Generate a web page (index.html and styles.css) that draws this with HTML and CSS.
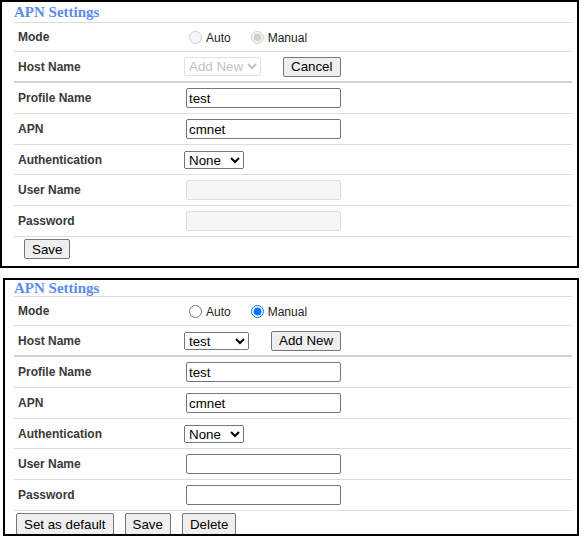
FILE: index.html
```html
<!DOCTYPE html>
<html>
<head>
<meta charset="utf-8">
<link rel="stylesheet" href="styles.css">
</head>
<body>
<div class="panel panel-a">
  <div class="heading">APN Settings</div>
  <div class="row row-mode">
    <div class="label">Mode</div>
    <div class="field">
      <label class="radio"><input type="radio" name="m1" disabled>Auto</label>
      <label class="radio"><input type="radio" name="m1" checked disabled>Manual</label>
    </div>
  </div>
  <div class="row row-host">
    <div class="label">Host Name</div>
    <div class="field">
      <select class="sel sel-addnew" disabled><option>Add New</option></select>
      <button class="btn btn-gap">Cancel</button>
    </div>
  </div>
  <div class="row">
    <div class="label">Profile Name</div>
    <div class="field"><input class="txt" type="text" value="test"></div>
  </div>
  <div class="row">
    <div class="label">APN</div>
    <div class="field"><input class="txt" type="text" value="cmnet"></div>
  </div>
  <div class="row row-auth">
    <div class="label">Authentication</div>
    <div class="field"><select class="sel sel-auth"><option>None</option></select></div>
  </div>
  <div class="row">
    <div class="label">User Name</div>
    <div class="field"><input class="txt" type="text" disabled></div>
  </div>
  <div class="row">
    <div class="label">Password</div>
    <div class="field"><input class="txt" type="password" disabled></div>
  </div>
  <div class="footer footer-a">
    <button class="btn">Save</button>
  </div>
</div>

<div class="panel panel-b">
  <div class="heading">APN Settings</div>
  <div class="row row-mode">
    <div class="label">Mode</div>
    <div class="field">
      <label class="radio"><input type="radio" name="m2">Auto</label>
      <label class="radio"><input type="radio" name="m2" checked>Manual</label>
    </div>
  </div>
  <div class="row row-host">
    <div class="label">Host Name</div>
    <div class="field">
      <select class="sel sel-host"><option>test</option></select>
      <button class="btn btn-gap">Add New</button>
    </div>
  </div>
  <div class="row">
    <div class="label">Profile Name</div>
    <div class="field"><input class="txt" type="text" value="test"></div>
  </div>
  <div class="row">
    <div class="label">APN</div>
    <div class="field"><input class="txt" type="text" value="cmnet"></div>
  </div>
  <div class="row row-auth">
    <div class="label">Authentication</div>
    <div class="field"><select class="sel sel-auth"><option>None</option></select></div>
  </div>
  <div class="row">
    <div class="label">User Name</div>
    <div class="field"><input class="txt" type="text"></div>
  </div>
  <div class="row">
    <div class="label">Password</div>
    <div class="field"><input class="txt" type="password"></div>
  </div>
  <div class="footer footer-b">
    <button class="btn">Set as default</button>
    <button class="btn">Save</button>
    <button class="btn">Delete</button>
  </div>
</div>
</body>
</html>
```

FILE: styles.css
```css
html, body {
  margin: 0;
  padding: 0;
  background: #fff;
}
body {
  font-family: "Liberation Sans", Arial, sans-serif;
  color: #333;
}
.panel {
  box-sizing: border-box;
  border: 2px solid #000;
  padding-right: 5px;
}
.panel-a {
  width: 579px;
  margin-left: 0;
  padding-left: 12px;
}
.panel-b {
  width: 576px;
  margin-left: 3px;
  margin-top: 10px;
  padding-left: 9px;
}
.heading {
  font-family: "Liberation Serif", "Times New Roman", serif;
  font-weight: bold;
  font-size: 15px;
  color: #5b8def;
  height: 20px;
  line-height: 20px;
  border-bottom: 1px solid #dcdcdc;
}
.panel-b .heading {
  height: 16px;
  line-height: 16px;
}
.row {
  display: flex;
  align-items: center;
  height: 30px;
  border-bottom: 1px solid #dcdcdc;
}
.row-mode {
  height: 28px;
}
.row-host {
  height: 29px;
  border-bottom: 2px solid #d2d2d2;
}
.row-auth {
  height: 29px;
}
.label {
  width: 166px;
  padding-left: 4px;
  font-size: 12px;
  font-weight: bold;
  color: #3a3a3a;
}
.field {
  display: flex;
  align-items: center;
}
.radio {
  display: inline-flex;
  align-items: center;
  font-size: 12px;
  color: #222;
  margin-right: 15px;
  padding-top: 2px;
}
.radio input {
  margin: 0 4px 2px 5px;
  width: 13px;
  height: 13px;
}
.txt {
  box-sizing: border-box;
  width: 155px;
  height: 20px;
  margin: 0 0 0 2px;
  padding: 1px 2px;
  font-family: "Liberation Sans", Arial, sans-serif;
  font-size: 13.33px;
  color: #000;
  border: 1px solid #767676;
  border-radius: 2px;
  background: #fff;
}
.txt:disabled {
  background: #f6f6f6;
  border-color: #dcdcdc;
}
.sel {
  box-sizing: border-box;
  height: 18px;
  margin: 0;
  font-family: "Liberation Sans", Arial, sans-serif;
  font-size: 13.33px;
  color: #000;
}
.sel:disabled {
  color: #a8a8a8;
  border: 1px solid #d4d4d4;
  border-radius: 2px;
  background-color: #fff;
}
.sel-addnew {
  width: 77px;
  height: 19px;
}
.sel-host {
  width: 65px;
}
.sel-auth {
  width: 60px;
}
.btn {
  box-sizing: border-box;
  height: 20px;
  margin: 0;
  padding: 0 7px;
  font-family: "Liberation Sans", Arial, sans-serif;
  font-size: 13.33px;
  color: #000;
  background: #efefef;
  border: 1px solid #767676;
  border-radius: 2px;
}
.btn-gap {
  margin-left: 22px;
}
.footer {
  display: flex;
  align-items: flex-start;
  overflow: hidden;
}
.footer-a {
  height: 29px;
  padding-top: 2px;
  padding-left: 10px;
  box-sizing: border-box;
}
.footer-b {
  height: 23px;
  padding-top: 2px;
  padding-left: 2px;
  box-sizing: border-box;
  gap: 11px;
}
.footer-b .btn {
  height: 22px;
}
```
